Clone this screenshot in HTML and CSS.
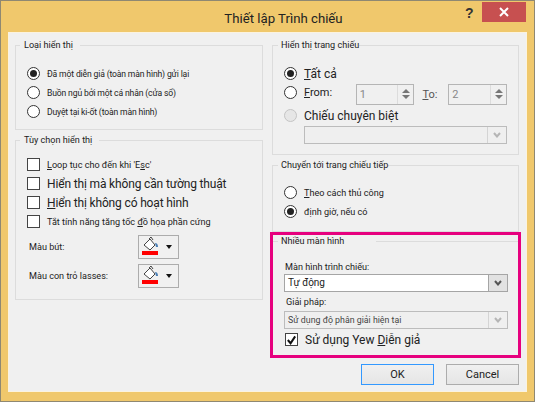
FILE: index.html
```html
<!DOCTYPE html>
<html lang="en">
<head>
  <meta charset="UTF-8">
  <title>Thiết lập Trình chiếu</title>
  <link rel="stylesheet" href="styles.css">
</head>
<body>

<div class="dialog">
  <header class="titlebar">
    <h1>Thiết lập Trình chiếu</h1>
    <span class="help">?</span>
    <span class="close">
      <svg width="12" height="12" viewBox="0 0 12 12"><path d="M2 2 L10 10 M10 2 L2 10" stroke="#fff" stroke-width="2"/></svg>
    </span>
  </header>

  <div class="client">
    <div class="columns">
      <div class="col">
        <fieldset class="group group-type">
          <legend>Loại hiển thị</legend>
          <label class="opt"><span class="radio on"></span>Đã một diễn giả (toàn màn hình) gửi lại</label>
          <label class="opt"><span class="radio"></span>Buồn ngủ bởi một cá nhân (cửa sổ)</label>
          <label class="opt"><span class="radio"></span>Duyệt tại ki-ốt (toàn màn hình)</label>
        </fieldset>

        <fieldset class="group group-options">
          <legend>Tùy chọn hiển thị</legend>
          <label class="opt"><span class="check"></span><span><u>L</u>oop tục cho đến khi 'E<u>s</u>c'</span></label>
          <label class="opt big"><span class="check"></span>Hiển thị mà không cần tường thuật</label>
          <label class="opt big"><span class="check"></span><span><u>H</u>iển thị không có hoạt hình</span></label>
          <label class="opt"><span class="check"></span><span>Tắt tính năng tăng tốc <u>đ</u>ồ họa phần cứng</span></label>

          <div class="color-row">
            <span>Màu bút:</span>
            <button class="color-btn">
              <svg width="18" height="20" viewBox="0 0 18 20"><path d="M2 8 L8 2 L13 8 L8 13 Z" fill="#fff" stroke="#444"/><path d="M7 2 L9 0 L11 3" fill="none" stroke="#444"/><path d="M13 6 Q16 6 16 10 L14 10 Z" fill="#4a7fb5"/><rect x="0" y="14" width="16" height="4" fill="#f00"/></svg>
              <span class="caret"></span>
            </button>
          </div>
          <div class="color-row">
            <span>Màu con trỏ lasses:</span>
            <button class="color-btn">
              <svg width="18" height="20" viewBox="0 0 18 20"><path d="M2 8 L8 2 L13 8 L8 13 Z" fill="#fff" stroke="#444"/><path d="M7 2 L9 0 L11 3" fill="none" stroke="#444"/><path d="M13 6 Q16 6 16 10 L14 10 Z" fill="#4a7fb5"/><rect x="0" y="14" width="16" height="4" fill="#f00"/></svg>
              <span class="caret"></span>
            </button>
          </div>
        </fieldset>
      </div>

      <div class="col">
        <fieldset class="group group-slides">
          <legend class="tight">Hiển thị trang chiếu</legend>
          <label class="opt big"><span class="radio on"></span><span><u>T</u>ất cả</span></label>
          <div class="opt from-row">
            <span class="radio"></span>
            <span class="from-label"><u>F</u>rom:</span>
            <span class="spin"><span class="spin-val">1</span><span class="arrows"><i class="up"></i><i class="down"></i></span></span>
            <span class="to-label"><u>T</u>o:</span>
            <span class="spin"><span class="spin-val">2</span><span class="arrows"><i class="up"></i><i class="down"></i></span></span>
          </div>
          <label class="opt big custom"><span class="radio off"></span>Chiếu chuyên biệt</label>
          <div class="combo disabled custom-combo">
            <span class="combo-val"></span>
            <span class="combo-arrow"><svg width="8" height="6" viewBox="0 0 8 6"><path d="M1 1 L4 4.5 L7 1" fill="none" stroke="#b5b5b5" stroke-width="2"/></svg></span>
          </div>
        </fieldset>

        <fieldset class="group group-advance">
          <legend class="tight">Chuyển tới trang chiếu tiếp</legend>
          <label class="opt"><span class="radio"></span><span><u>T</u>heo cách thủ công</span></label>
          <label class="opt"><span class="radio on"></span>định giờ, nếu có</label>
        </fieldset>

        <div class="highlight">
          <fieldset class="group group-monitors">
            <legend>Nhiều màn hình</legend>
            <div class="field-label">Màn hình trình chiếu:</div>
            <div class="combo">
              <span class="combo-val auto">Tự động</span>
              <span class="combo-arrow active"><svg width="8" height="6" viewBox="0 0 8 6"><path d="M1 1 L4 4.5 L7 1" fill="none" stroke="#555" stroke-width="2"/></svg></span>
            </div>
            <div class="field-label second">Giải pháp:</div>
            <div class="combo disabled">
              <span class="combo-val">Sử dụng độ phân giải hiện tại</span>
              <span class="combo-arrow"><svg width="8" height="6" viewBox="0 0 8 6"><path d="M1 1 L4 4.5 L7 1" fill="none" stroke="#b5b5b5" stroke-width="2"/></svg></span>
            </div>
            <label class="opt big presenter">
              <span class="check"><svg width="12" height="12" viewBox="0 0 12 12"><path d="M2 6 L5 9.5 L10 2" fill="none" stroke="#111" stroke-width="2.2"/></svg></span>
              <span>Sử dụng Yew <u>D</u>iễn giả</span>
            </label>
          </fieldset>
        </div>

        <footer class="buttons">
          <button class="btn default">OK</button>
          <button class="btn">Cancel</button>
        </footer>
      </div>
    </div>
  </div>
</div>

</body>
</html>
```

FILE: styles.css
```css
* { box-sizing: border-box; margin: 0; padding: 0; }
body {
  width: 535px;
  height: 402px;
  overflow: hidden;
  font-family: Roboto, "Noto Sans", sans-serif;
  font-size: 9.1px;
  color: #222;
  background: #fff;
}

/* window frame */
.dialog {
  width: 535px;
  height: 402px;
  display: flex;
  flex-direction: column;
  background: #f0c86c;
  border: 1px solid #8f8872;
  padding: 0 7px 9px 7px;
}
.titlebar {
  height: 31px;
  flex: none;
  display: flex;
  align-items: flex-start;
  justify-content: center;
  position: relative;
}
.titlebar h1 {
  font-size: 13.2px;
  font-weight: 400;
  line-height: 35px;
  color: #222;
  margin-left: 32px;
}
.help {
  position: absolute;
  left: 457px;
  top: 1px;
  font: 700 14px/22px "Liberation Sans", sans-serif;
  color: #333;
}
.close {
  position: absolute;
  left: 474px;
  top: 1px;
  width: 44px;
  height: 20px;
  background: #c75050;
  display: flex;
  align-items: center;
  justify-content: center;
}

.client {
  flex: 1;
  background: #f0f0f0;
  border: 1px solid #fbf3df;
  padding: 5px 6px 0 6px;
}
.columns {
  display: grid;
  grid-template-columns: 248px 247px;
  column-gap: 9px;
}

/* group boxes */
.group {
  border: 1px solid #dcdcdc;
  display: block;
  min-width: 0;
}
.group legend {
  margin-left: -7px;
  padding: 0 7px 0 4px;
  font-size: 9.1px;
  line-height: 14px;
}
.group legend.tight { margin-left: -6px; padding: 0 0 0 3px; }
.group-type { height: 92px; padding: 12px 11px 0; margin-bottom: 3px; }
.group-type .opt { font-size: 8.6px; letter-spacing: -.15px; }
.group-options { height: 167px; padding: 8px 11px 0; }
.group-options .big { letter-spacing: -.15px; }
.group-slides { height: 117px; padding: 12px 11px 0; margin-bottom: 3px; }
.group-advance { height: 74px; padding: 11px 11px 0; }

/* option rows */
.opt {
  display: flex;
  align-items: center;
  gap: 7px;
  height: 19px;
}
.opt.big { font-size: 12px; }
.custom { margin-top: 4px; }
.radio {
  width: 13px;
  height: 13px;
  flex: none;
  border: 1px solid #333;
  border-radius: 50%;
  background: #fff;
  display: flex;
  align-items: center;
  justify-content: center;
}
.radio.on::before {
  content: "";
  width: 7px;
  height: 7px;
  border-radius: 50%;
  background: #222;
}
.radio.off { background: #e6e6e6; border-color: #c4c4c4; }
.check {
  width: 13px;
  height: 13px;
  flex: none;
  border: 1px solid #444;
  background: #fff;
  display: flex;
  align-items: center;
  justify-content: center;
}

/* colour pickers */
.color-row {
  height: 29px;
  display: flex;
  align-items: center;
  justify-content: space-between;
  padding: 0 72px 0 2px;
}
.group-options .opt + .color-row { margin-top: 1px; }
.color-btn {
  width: 41px;
  height: 24px;
  background: #f0f0f0;
  border: 1px solid #acacac;
  display: flex;
  align-items: center;
  gap: 6px;
  padding: 0 0 0 3px;
}
.caret {
  width: 0;
  height: 0;
  border: 3.5px solid transparent;
  border-top: 4px solid #111;
  border-bottom: 0;
}

/* from / to spinners */
.from-row { gap: 7px; font-size: 11px; }
.from-label { width: 45px; }
.to-label { width: 19px; margin-left: 1px; margin-top: 3px; color: #555; }
.spin {
  width: 59px;
  height: 21px;
  margin-top: 3px;
  border: 1px solid #b5b5b5;
  display: flex;
  justify-content: space-between;
  color: #888;
}
.spin-val { padding: 3px 0 0 3px; }
.arrows {
  width: 16px;
  border-left: 1px solid #dcdcdc;
  display: flex;
  flex-direction: column;
  align-items: center;
  justify-content: space-around;
  padding: 3px 0;
}
.arrows i { width: 0; height: 0; border: 4px solid transparent; }
.arrows .up { border-bottom: 4px solid #777; border-top: 0; }
.arrows .down { border-top: 4px solid #777; border-bottom: 0; }

/* combos */
.combo {
  height: 18px;
  border: 1px solid #a5a5a5;
  background: #fff;
  display: flex;
  justify-content: space-between;
}
.combo.disabled { background: #efefef; color: #444; border-color: #bcbcbc; }
.combo.disabled .combo-val { font-size: 8.8px; }
.custom-combo { margin: 1px 0 0 20px; }
.combo-val { padding-left: 3px; line-height: 16px; }
.combo-val.auto { font-size: 10px; }
.combo-arrow {
  width: 19px;
  border-left: 1px solid #d4d4d4;
  display: flex;
  align-items: center;
  justify-content: center;
}
.combo-arrow.active { background: #e2e2e2; border-left-color: #a5a5a5; }

/* multiple monitors, pink callout */
.highlight {
  margin: 0 -2px;
  height: 126px;
  border: 3px solid #e6007e;
}
.group-monitors {
  height: 100%;
  border: 0;
  border-top: 1px solid #dcdcdc;
  margin-top: -1px;
  padding: 12px 10px 0 11px;
}
.group-monitors legend {
  width: 98px;
  margin-left: -6px;
  padding-left: 3px;
}
.field-label { line-height: 14px; margin-left: 1px; }
.field-label.second { margin: 3px 0 2px 2px; }
.presenter { margin-top: 1px; padding-left: 1px; }

/* footer buttons */
.buttons {
  display: flex;
  justify-content: flex-end;
  gap: 12px;
  margin-top: 6px;
}
.btn {
  width: 73px;
  height: 21px;
  border: 1px solid #acacac;
  background: linear-gradient(#f0f0f0, #e5e5e5);
  font: 11px Roboto, sans-serif;
  color: #222;
}
.btn.default { border: 1px solid #3399ff; }
```
